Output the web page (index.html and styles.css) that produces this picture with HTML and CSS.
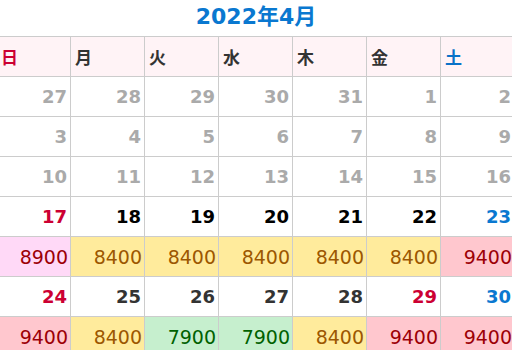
FILE: index.html
```html
<!DOCTYPE html>
<html lang="ja">
<head>
<meta charset="utf-8">
<link rel="stylesheet" href="styles.css">
</head>
<body>
<div class="page">
  <h1 class="title">2022年4月</h1>
  <table class="cal">
    <thead>
      <tr><th class="sun">日</th><th>月</th><th>火</th><th>水</th><th>木</th><th>金</th><th class="sat">土</th></tr>
    </thead>
    <tbody>
      <tr class="day other"><td>27</td><td>28</td><td>29</td><td>30</td><td>31</td><td>1</td><td>2</td></tr>
      <tr class="day other"><td>3</td><td>4</td><td>5</td><td>6</td><td>7</td><td>8</td><td>9</td></tr>
      <tr class="day other"><td>10</td><td>11</td><td>12</td><td>13</td><td>14</td><td>15</td><td>16</td></tr>
      <tr class="day dark"><td class="red">17</td><td>18</td><td>19</td><td>20</td><td>21</td><td>22</td><td class="blue">23</td></tr>
      <tr class="price"><td class="p-mag">8900</td><td class="p-yel">8400</td><td class="p-yel">8400</td><td class="p-yel">8400</td><td class="p-yel">8400</td><td class="p-yel">8400</td><td class="p-pink">9400</td></tr>
      <tr class="day"><td class="red">24</td><td>25</td><td>26</td><td>27</td><td>28</td><td class="red">29</td><td class="blue">30</td></tr>
      <tr class="price"><td class="p-pink">9400</td><td class="p-yel">8400</td><td class="p-grn">7900</td><td class="p-grn">7900</td><td class="p-yel">8400</td><td class="p-pink">9400</td><td class="p-pink">9400</td></tr>
    </tbody>
  </table>
</div>
</body>
</html>
```
FILE: styles.css
```css
html, body {
  margin: 0;
  padding: 0;
  background: #fff;
  overflow: hidden;
}
.page {
  font-family: "DejaVu Sans", "Noto Sans CJK JP", sans-serif;
  margin-left: -4px;
  width: 519px;
}
.title {
  margin: 0;
  height: 36px;
  font-size: 22px;
  line-height: 34px;
  font-weight: bold;
  color: #0a78d0;
  text-align: center;
  padding-left: 1px;
}
.cal {
  border-collapse: collapse;
  table-layout: fixed;
  width: 519px;
}
.cal tr {
  height: 40px;
}
.cal th, .cal td {
  border: 1px solid #cccccc;
  width: 73px;
  padding: 0 3px 0 4px;
  box-sizing: border-box;
}
.cal th {
  background: #fff3f6;
  text-align: left;
  font-size: 17px;
  font-weight: bold;
  color: #333;
  font-family: "Noto Sans CJK JP", sans-serif;
  padding-left: 4px;
}
.cal th.sun { color: #cc0033; }
.cal th.sat { color: #0a72c8; }
.day td {
  text-align: right;
  font-size: 18px;
  font-weight: bold;
  color: #333;
}
.day.other td { color: #aaaaaa; }
.day.dark td { color: #000; }
.day td.red { color: #cc0033; }
.day td.blue { color: #0a78d0; }
.price td {
  text-align: right;
  font-size: 19px;
  font-weight: normal;
  padding-right: 2px;
}
.p-yel { background: #ffeb9c; color: #9c5700; }
.p-pink { background: #ffc7ce; color: #9c0006; }
.p-mag { background: #ffd9f7; color: #9c0006; }
.p-grn { background: #c6efce; color: #006100; }
```
